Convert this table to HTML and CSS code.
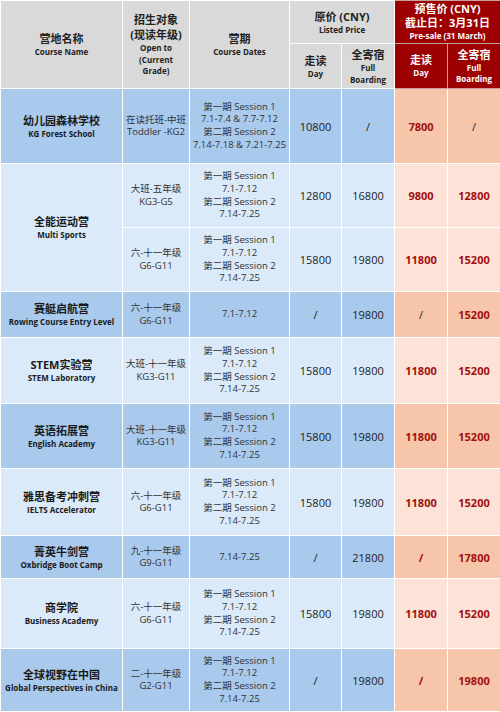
FILE: index.html
```html
<!DOCTYPE html>
<html lang="zh">
<head>
<meta charset="utf-8">
<link rel="stylesheet" href="styles.css">
</head>
<body>
<table class="t">
  <colgroup>
    <col class="c1"><col class="c2"><col class="c3"><col class="c4"><col class="c5"><col class="c6"><col class="c7">
  </colgroup>
  <thead>
    <tr class="h1">
      <th rowspan="2" class="hg"><div class="zh">营地名称</div><div class="en">Course Name</div></th>
      <th rowspan="2" class="hg"><div class="zh">招生对象</div><div class="zh">(现读年级)</div><div class="en">Open to<br>(Current<br>Grade)</div></th>
      <th rowspan="2" class="hg"><div class="zh">营期</div><div class="en">Course Dates</div></th>
      <th colspan="2" class="hg"><div class="zh">原价 (CNY)</div><div class="en">Listed Price</div></th>
      <th colspan="2" class="hr"><div class="zh">预售价 (CNY)</div><div class="zh">截止日：3月31日</div><div class="en">Pre-sale (31 March)</div></th>
    </tr>
    <tr class="h2">
      <th class="hg"><div class="zh">走读</div><div class="en">Day</div></th>
      <th class="hg"><div class="zh">全寄宿</div><div class="en">Full<br>Boarding</div></th>
      <th class="hr"><div class="zh">走读</div><div class="en">Day</div></th>
      <th class="hr"><div class="zh">全寄宿</div><div class="en">Full<br>Boarding</div></th>
    </tr>
  </thead>
  <tbody>
    <tr class="dk r1">
      <td class="nm"><div class="zh">幼儿园森林学校</div><div class="en">KG Forest School</div></td>
      <td class="gr">在读托班-中班<br>Toddler -KG2</td>
      <td class="dt">第一期 Session 1<br>7.1-7.4 &amp; 7.7-7.12<br>第二期 Session 2<br>7.14-7.18 &amp; 7.21-7.25</td>
      <td class="pr">10800</td>
      <td class="pr">/</td>
      <td class="ps red">7800</td>
      <td class="ps">/</td>
    </tr>
    <tr class="lt r2">
      <td class="nm" rowspan="2"><div class="zh">全能运动营</div><div class="en">Multi Sports</div></td>
      <td class="gr">大班-五年级<br>KG3-G5</td>
      <td class="dt">第一期 Session 1<br>7.1-7.12<br>第二期 Session 2<br>7.14-7.25</td>
      <td class="pr">12800</td>
      <td class="pr">16800</td>
      <td class="ps red">9800</td>
      <td class="ps red">12800</td>
    </tr>
    <tr class="lt r3">
      <td class="gr">六-十一年级<br>G6-G11</td>
      <td class="dt">第一期 Session 1<br>7.1-7.12<br>第二期 Session 2<br>7.14-7.25</td>
      <td class="pr">15800</td>
      <td class="pr">19800</td>
      <td class="ps red">11800</td>
      <td class="ps red">15200</td>
    </tr>
    <tr class="dk r4">
      <td class="nm"><div class="zh">赛艇启航营</div><div class="en">Rowing Course Entry Level</div></td>
      <td class="gr">六-十一年级<br>G6-G11</td>
      <td class="dt">7.1-7.12</td>
      <td class="pr">/</td>
      <td class="pr">19800</td>
      <td class="ps">/</td>
      <td class="ps red">15200</td>
    </tr>
    <tr class="lt r5">
      <td class="nm"><div class="zh">STEM实验营</div><div class="en">STEM Laboratory</div></td>
      <td class="gr">大班-十一年级<br>KG3-G11</td>
      <td class="dt">第一期 Session 1<br>7.1-7.12<br>第二期 Session 2<br>7.14-7.25</td>
      <td class="pr">15800</td>
      <td class="pr">19800</td>
      <td class="ps red">11800</td>
      <td class="ps red">15200</td>
    </tr>
    <tr class="dk r6">
      <td class="nm"><div class="zh">英语拓展营</div><div class="en">English Academy</div></td>
      <td class="gr">大班-十一年级<br>KG3-G11</td>
      <td class="dt">第一期 Session 1<br>7.1-7.12<br>第二期 Session 2<br>7.14-7.25</td>
      <td class="pr">15800</td>
      <td class="pr">19800</td>
      <td class="ps red">11800</td>
      <td class="ps red">15200</td>
    </tr>
    <tr class="lt r7">
      <td class="nm"><div class="zh">雅思备考冲刺营</div><div class="en">IELTS Accelerator</div></td>
      <td class="gr">六-十一年级<br>G6-G11</td>
      <td class="dt">第一期 Session 1<br>7.1-7.12<br>第二期 Session 2<br>7.14-7.25</td>
      <td class="pr">15800</td>
      <td class="pr">19800</td>
      <td class="ps red">11800</td>
      <td class="ps red">15200</td>
    </tr>
    <tr class="dk r8">
      <td class="nm"><div class="zh">菁英牛剑营</div><div class="en">Oxbridge Boot Camp</div></td>
      <td class="gr">九-十一年级<br>G9-G11</td>
      <td class="dt">7.14-7.25</td>
      <td class="pr">/</td>
      <td class="pr">21800</td>
      <td class="ps red">/</td>
      <td class="ps red">17800</td>
    </tr>
    <tr class="lt r9">
      <td class="nm"><div class="zh">商学院</div><div class="en">Business Academy</div></td>
      <td class="gr">六-十一年级<br>G6-G11</td>
      <td class="dt">第一期 Session 1<br>7.1-7.12<br>第二期 Session 2<br>7.14-7.25</td>
      <td class="pr">15800</td>
      <td class="pr">19800</td>
      <td class="ps red">11800</td>
      <td class="ps red">15200</td>
    </tr>
    <tr class="dk r10">
      <td class="nm"><div class="zh">全球视野在中国</div><div class="en">Global Perspectives in China</div></td>
      <td class="gr">二-十一年级<br>G2-G11</td>
      <td class="dt">第一期 Session 1<br>7.1-7.12<br>第二期 Session 2<br>7.14-7.25</td>
      <td class="pr">/</td>
      <td class="pr">19800</td>
      <td class="ps red">/</td>
      <td class="ps red">19800</td>
    </tr>
  </tbody>
</table>
</body>
</html>
```

FILE: styles.css
```css
html, body {
  margin: 0;
  padding: 0;
  background: #ffffff;
}
body {
  font-family: "Open Sans", "Noto Sans CJK SC", sans-serif;
  color: #222222;
  width: 500px;
  height: 712px;
  overflow: hidden;
}
.t {
  width: 500px;
  table-layout: fixed;
  border-collapse: collapse;
}
.c1 { width: 122px; }
.c2 { width: 67px; }
.c3 { width: 100px; }
.c4 { width: 52px; }
.c5 { width: 53px; }
.c6 { width: 53px; }
.c7 { width: 53px; }

th, td {
  border: 1px solid #ffffff;
  padding: 0;
  text-align: center;
  vertical-align: middle;
}
th {
  font-weight: 700;
}
.hg {
  background: #d9d9d9;
  color: #222222;
}
.hr {
  background: #9c0000;
  color: #ffffff;
  border-color: #c9a0a0;
}
.h1 { height: 43px; }
.h2 { height: 45px; }
th .zh {
  font-size: 11px;
  line-height: 15px;
}
th .en {
  font-size: 8px;
  line-height: 11.5px;
}
.hr .zh { line-height: 14px; }

.dk td { background: #a9c9ed; }
.lt td { background: #daeaf9; }
.dk td.ps { background: #f7c6aa; }
.lt td.ps { background: #fde3d7; }

.r1 { height: 75px; }
.r2 { height: 64px; }
.r3 { height: 64px; }
.r4 { height: 46px; }
.r5 { height: 66px; }
.r6 { height: 65px; }
.r7 { height: 67px; }
.r8 { height: 43px; }
.r9 { height: 70px; }
.r10 { height: 63px; }

.nm .zh {
  font-size: 11px;
  font-weight: 700;
  line-height: 15px;
  color: #1a1a1a;
}
.nm .en {
  font-size: 8px;
  font-weight: 700;
  line-height: 12px;
  color: #1a1a1a;
}
.gr {
  font-size: 9.5px;
  line-height: 12.5px;
  color: #333333;
}
.dt {
  font-size: 9.5px;
  line-height: 12.6px;
  color: #333333;
}
.pr, .ps {
  font-size: 11px;
  color: #222222;
}
.red {
  color: #a30f0f;
  font-weight: 700;
}
```
